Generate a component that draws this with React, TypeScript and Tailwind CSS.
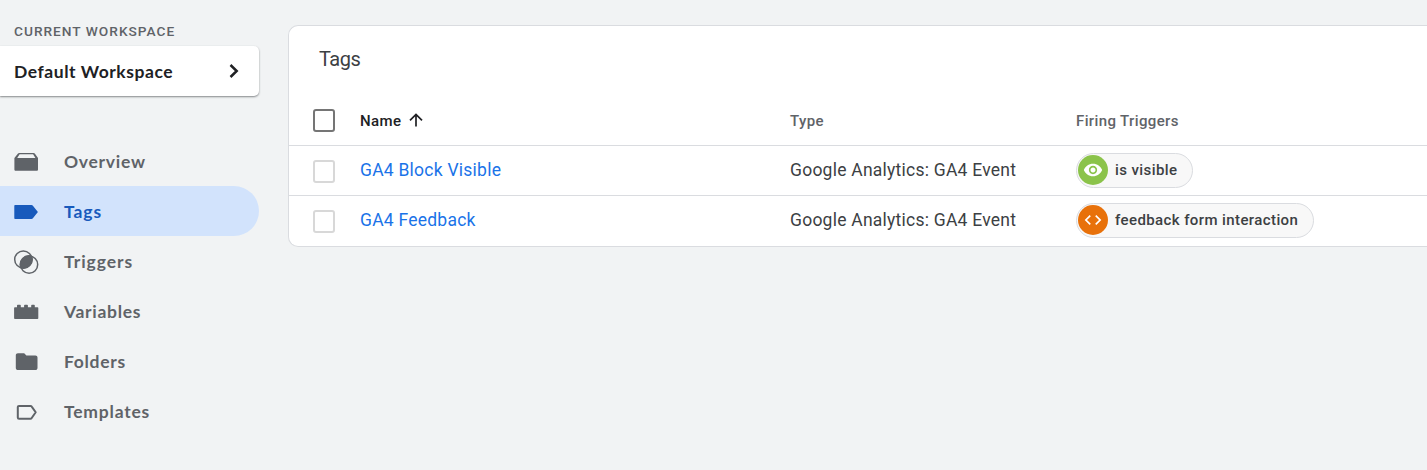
import type { ReactNode } from "react";

const ROBOTO = "font-['Roboto','Liberation_Sans',sans-serif]";
const BRAND = "font-['Lato','Liberation_Sans',sans-serif]";

function OverviewIcon() {
  return (
    <svg width="26" height="20" viewBox="0 0 26 20" fill="currentColor">
      <path d="M6.200.9h14.400c.5 0 .9.200 1.200.6l3.200 4.400v11.500c0 .8-.5 1.300-1.300 1.300H2.700c-.8 0-1.300-.5-1.300-1.300V5.900l3.600-4.400c.3-.4.700-.6 1.200-.6zM6.600 2.200 4.200 5.900h18.200L20.100 2.200z" fillRule="evenodd" />
    </svg>
  );
}

function TagIcon() {
  return (
    <svg width="26" height="20" viewBox="0 0 26 20" fill="currentColor">
      <path d="M2.300 3h16.200c.6 0 1.100.2 1.400.7l5 6.300-5 6.300c-.3.500-.8.700-1.400.7H2.300c-.6 0-1-.4-1-1V4c0-.6.400-1 1-1z" />
    </svg>
  );
}

function TriggersIcon() {
  return (
    <svg width="26" height="26" viewBox="0 0 26 26">
      <circle cx="10.300" cy="10.500" r="8.600" fill="none" stroke="currentColor" strokeWidth="1.500" />
      <circle cx="16.100" cy="15.600" r="8.600" fill="none" stroke="currentColor" strokeWidth="1.500" />
      <path d="M18.400 7.200A8.700 8.700 0 0 1 8 18.900A8.700 8.700 0 0 1 18.400 7.200z" fill="currentColor" stroke="currentColor" strokeWidth="1.500" strokeLinejoin="round" />
    </svg>
  );
}

function VariablesIcon() {
  return (
    <svg width="26" height="20" viewBox="0 0 26 20" fill="currentColor">
      <path d="M1.900 5.200h2.100V3.600c0-.5.300-.8.800-.8h2.200c.5 0 .8.300.8.800v1.600h3.300V3.600c0-.5.300-.8.800-.8h2.200c.5 0 .8.300.8.800v1.600h3.300V3.600c0-.5.300-.8.800-.8h2c.5 0 .8.300.8.800v1.600h2.700c.5 0 .8.300.8.800v10.200c0 .5-.3.800-.8.800H1.900c-.5 0-.8-.3-.8-.8V6c0-.5.300-.8.800-.8z" />
    </svg>
  );
}

function FolderIcon() {
  return (
    <svg width="26" height="20" viewBox="0 0 26 20" fill="currentColor">
      <path d="M4.900 1.200h6.300l2.200 2.200h9c1.200 0 2.100.9 2.100 2.100v10.500c0 1.200-.9 2.100-2.100 2.100H4.900c-1.200 0-2.100-.9-2.100-2.100V3.300c0-1.200.9-2.100 2.100-2.100z" />
    </svg>
  );
}

function TemplateIcon() {
  return (
    <svg width="26" height="20" viewBox="0 0 26 20" fill="none" stroke="currentColor" strokeWidth="2" strokeLinejoin="round">
      <path d="M6 3.900h11.400c.6 0 1 .2 1.300.7l4 5.700-4 5.700c-.3.500-.7.700-1.300.7H6c-.7 0-1.200-.5-1.200-1.200V5.100c0-.7.500-1.200 1.200-1.200z" />
    </svg>
  );
}

const NAV: { label: string; icon: ReactNode; spacing: string; active?: boolean }[] = [
  { label: "Overview", icon: <OverviewIcon />, spacing: "tracking-[0.73px]" },
  { label: "Tags", icon: <TagIcon />, spacing: "tracking-[0.9px]", active: true },
  { label: "Triggers", icon: <TriggersIcon />, spacing: "tracking-[0.95px]" },
  { label: "Variables", icon: <VariablesIcon />, spacing: "tracking-[0.7px]" },
  { label: "Folders", icon: <FolderIcon />, spacing: "tracking-[0.7px]" },
  { label: "Templates", icon: <TemplateIcon />, spacing: "tracking-[0.8px]" },
];

const ROWS = [
  { name: "GA4 Block Visible", type: "Google Analytics: GA4 Event", trigger: "is visible", kind: "visible" },
  { name: "GA4 Feedback", type: "Google Analytics: GA4 Event", trigger: "feedback form interaction", kind: "code" },
];

const GRID = "grid grid-cols-[71px_430px_286px_1fr] items-center";

function Checkbox({ strong }: { strong?: boolean }) {
  return (
    <span className={`ml-[24px] block h-[23px] w-[22px] rounded-[3px] border-2 ${strong ? "mt-px border-[#757575]" : "mt-px border-[#d8d8d8]"}`} />
  );
}

function TriggerChip({ label, kind }: { label: string; kind: string }) {
  return (
    <span className="flex h-[35px] w-fit items-center rounded-full border border-[#dadce0] bg-[#f8f8f8] pl-px pr-[15px]">
      <span className={`mb-px flex size-[30px] items-center justify-center rounded-full text-white ${kind === "visible" ? "bg-[#8bc34a]" : "bg-[#e8710a]"}`}>
        {kind === "visible" ? (
          <svg width="20" height="20" viewBox="0 0 24 24" fill="currentColor">
            <path d="M12 4.500C7 4.500 2.730 7.610 1 12c1.730 4.390 6 7.500 11 7.500s9.270-3.110 11-7.500c-1.730-4.390-6-7.500-11-7.500zM12 17c-2.760 0-5-2.240-5-5s2.240-5 5-5 5 2.240 5 5-2.240 5-5 5zm0-8c-1.660 0-3 1.340-3 3s1.340 3 3 3 3-1.340 3-3-1.340-3-3-3z" />
          </svg>
        ) : (
          <svg width="20" height="20" viewBox="0 0 24 24" fill="currentColor">
            <path d="M9.400 16.600 4.800 12l4.600-4.600L8 6l-6 6 6 6 1.400-1.400zm5.200 0 4.600-4.600-4.600-4.600L16 6l6 6-6 6-1.400-1.400z" />
          </svg>
        )}
      </span>
      <span className="mb-[2px] ml-[7px] text-[15px] font-medium leading-5 tracking-[0.4px] text-[#3c4043]">{label}</span>
    </span>
  );
}

export default function App() {
  return (
    <div className={`flex h-[470px] w-full overflow-hidden bg-[#f1f3f4] ${ROBOTO}`}>
      <aside className="w-[259px] shrink-0">
        <div className="flex h-[46px] items-end pb-[5px] pl-[14px] text-[13.700px] font-medium leading-5 tracking-[1px] text-[#5f6368]">
          CURRENT WORKSPACE
        </div>
        <button className={`flex h-[50px] w-full items-center justify-between rounded-r-[5px] bg-white pl-[14px] pr-[19px] text-[17.500px] font-bold text-[#202124] shadow-[0_1px_2px_rgba(60,64,67,0.6)] ${BRAND}`}>
          <span className="pt-[2px] tracking-[0.55px]">Default Workspace</span>
          <svg width="12" height="16" viewBox="0 0 12 16" fill="none" stroke="currentColor" strokeWidth="2.500">
            <path d="M2.500 2 8.700 8l-6.200 6" />
          </svg>
        </button>
        <nav className={`mt-10 text-[17.500px] font-bold ${BRAND}`}>
          {NAV.map((item) => (
            <a
              key={item.label}
              className={`flex h-[50px] items-center rounded-r-full pl-[13px] ${item.active ? "bg-[#d2e3fc] text-[#185abc]" : "text-[#5f6368]"}`}
            >
              <span className="flex w-[51px] items-center pt-[2px]">{item.icon}</span>
              <span className={`pt-[2px] ${item.spacing}`}>{item.label}</span>
            </a>
          ))}
        </nav>
      </aside>
      <main className="ml-[29px] mt-[25px] h-[222px] flex-1 rounded-l-[10px] border-y border-l border-[#dadce0] bg-white">
        <h1 className="h-[69px] pl-[30px] pt-[19px] text-[20px] leading-7 tracking-[-0.5px] text-[#3c4043]">Tags</h1>
        <div className={`${GRID} h-[51px] border-b border-[#dadce0] text-[15px] font-medium leading-6 tracking-[0.37px] text-[#5f6368]`}>
          <Checkbox strong />
          <span className="flex items-center gap-[8px] pt-[2px] text-[#202124]">
            Name
            <svg className="mb-[2px]" width="14" height="14" viewBox="0 0 14 14" fill="none" stroke="currentColor" strokeWidth="1.700">
              <path d="M7 13.500V1.600M1 7.400l6-6 6 6" />
            </svg>
          </span>
          <span className="pt-[2px]">Type</span>
          <span className="pt-[2px]">Firing Triggers</span>
        </div>
        {ROWS.map((row) => (
          <div key={row.name} className={`${GRID} h-[50px] border-b border-[#dadce0] text-[17.500px] leading-[25px] tracking-[0.24px] text-[#3c4043] last:h-[49px] last:border-b-0`}>
            <Checkbox />
            <a className="text-[#1a73e8]">{row.name}</a>
            <span>{row.type}</span>
            <TriggerChip label={row.trigger} kind={row.kind} />
          </div>
        ))}
      </main>
    </div>
  );
}
